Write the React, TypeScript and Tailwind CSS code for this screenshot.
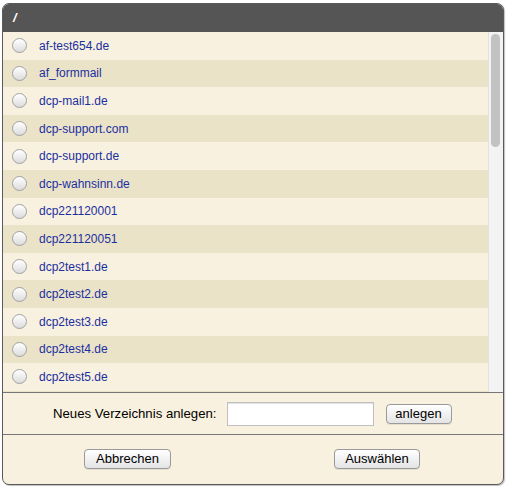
import React from 'react';

const folders = [
    'af-test654.de',
    'af_formmail',
    'dcp-mail1.de',
    'dcp-support.com',
    'dcp-support.de',
    'dcp-wahnsinn.de',
    'dcp221120001',
    'dcp221120051',
    'dcp2test1.de',
    'dcp2test2.de',
    'dcp2test3.de',
    'dcp2test4.de',
    'dcp2test5.de',
];

const Radio: React.FC = () => (
    <span className="block w-[15px] h-[15px] rounded-full border border-[#a0a0a0] bg-gradient-to-b from-white to-[#dcdcdc] shadow-[inset_0_1px_1px_rgba(255,255,255,0.9)]" />
);

const MacButton: React.FC<{ label: string; className?: string }> = ({ label, className = '' }) => (
    <button
        type="button"
        className={`h-[20px] rounded-[4px] border border-[#9a9a9a] bg-gradient-to-b from-white to-[#e4e4e4] text-[13px] leading-none text-black shadow-[0_1px_0_rgba(0,0,0,0.08)] ${className}`}
    >
        {label}
    </button>
);

export default function App() {
    return (
        <div className="w-[506px] h-[487px] bg-white pt-[3px] pl-[2px] font-['Liberation_Sans',Arial,sans-serif]">
            <div className="w-[502px] h-[482px] flex flex-col rounded-[7px] border border-[#5a5a5a] bg-[#f8f1df] overflow-hidden shadow-[1px_1px_1px_rgba(0,0,0,0.25)]">
                {/* title bar */}
                <div className="h-[28px] shrink-0 bg-[#555555] flex items-center pl-[10px]">
                    <span className="text-white text-[13px] font-bold italic">/</span>
                </div>

                {/* folder list with scrollbar; the next row peeks in at the bottom */}
                <div className="h-[361px] shrink-0 flex border-b border-[#777] overflow-hidden">
                    <ul className="flex-1 overflow-hidden bg-[#ebe3c8]">
                        {folders.map((name, i) => (
                            <li
                                key={name}
                                className={`h-[27.6px] flex items-center pl-[9px] ${i % 2 === 0 ? 'bg-[#f8f1df]' : 'bg-[#ebe3c8]'}`}
                            >
                                <Radio />
                                <span className="ml-[12px] text-[12px] text-[#1b2fa0]">{name}</span>
                            </li>
                        ))}
                    </ul>
                    <div className="w-[15px] shrink-0 bg-[#f3f3f3] border-l border-[#e2e2e2] pt-[2px] pl-[2px]">
                        <div className="w-[9px] h-[113px] rounded-full bg-[#c2c2c2]" />
                    </div>
                </div>

                {/* create folder */}
                <div className="h-[42px] shrink-0 flex items-center border-b border-[#777] pl-[50px]">
                    <span className="text-[13.2px] leading-[16px] text-black">Neues Verzeichnis anlegen:</span>
                    <input
                        type="text"
                        className="ml-[10px] w-[147px] h-[24px] bg-white border border-[#c0c0c0] shadow-[inset_0_1px_1px_rgba(0,0,0,0.12)] outline-none"
                    />
                    <MacButton label="anlegen" className="ml-[12px] w-[66px]" />
                </div>

                {/* actions */}
                <div className="flex-1 flex items-center pl-[81px] pb-[2px]">
                    <MacButton label="Abbrechen" className="w-[87px]" />
                    <MacButton label="Auswählen" className="ml-[163px] w-[86px]" />
                </div>
            </div>
        </div>
    );
}
